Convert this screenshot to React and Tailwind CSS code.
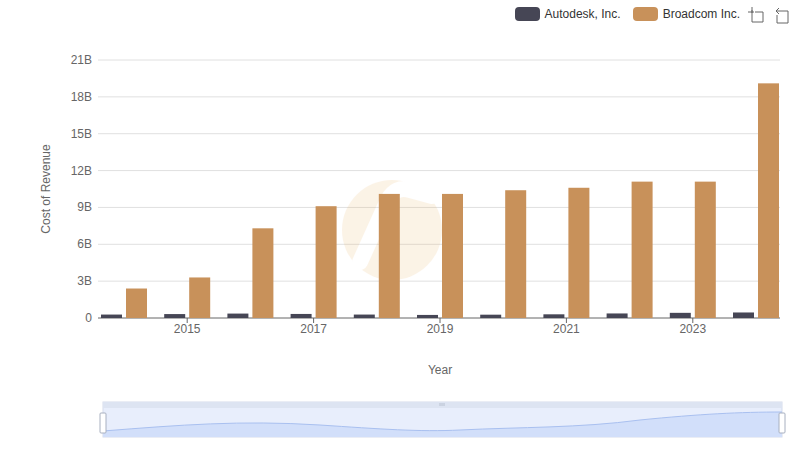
const years = [2014,2015,2016,2017,2018,2019,2020,2021,2022,2023,2024];
const broadcom = [2.4,3.3,7.3,9.1,10.1,10.1,10.4,10.6,11.1,11.1,19.1];
const autodesk = [0.28,0.32,0.36,0.33,0.28,0.25,0.27,0.3,0.37,0.42,0.45];

const X0 = 98, X1 = 780, Y0 = 318, PER = 258 / 21;

export default function App() {
  return (
    <div className="w-[800px] h-[461px] bg-white relative" style={{ fontFamily: '"Liberation Sans", Arial, sans-serif' }}>
      <div className="flex justify-end items-center gap-[12px] pt-[5px] pr-[60px] text-[12px] text-[#333]">
        <div className="flex items-center gap-[5px]">
          <span className="w-[25px] h-[14px] rounded-[4px] bg-[#464655]" />
          <span>Autodesk, Inc.</span>
        </div>
        <div className="flex items-center gap-[5px]">
          <span className="w-[25px] h-[14px] rounded-[4px] bg-[#c8915a]" />
          <span>Broadcom Inc.</span>
        </div>
      </div>
      <svg className="absolute left-0 top-0" width="800" height="461" style={{ pointerEvents: 'none' }}>
        <g stroke="#666" fill="none" strokeWidth="1">
          <path d="M752 10v12h11v-10h-8M748 12h6M752 7v6" />
          <path d="M776 11h12v12h-11v-8M776 11l3-3M776 11l3 3" />
        </g>
        {[0,3,6,9,12,15,18,21].map(v => {
          const y = Y0 - v * PER;
          return (
            <g key={v}>
              {v > 0 && <line x1={X0} x2={X1} y1={y} y2={y} stroke="#e0e0e0" />}
              <text x={92} y={y + 4} fontSize="12" fill="#666" textAnchor="end">{v === 0 ? '0' : v + 'B'}</text>
            </g>
          );
        })}
        <line x1={X0} x2={X1} y1={Y0} y2={Y0} stroke="#666" />
        <g opacity="0.13">
          <circle cx="392" cy="230" r="50" fill="#e8a74a" />
          <path d="M360 262 L388 200 Q395 186 410 190 L432 196" stroke="white" strokeWidth="16" fill="none" strokeLinecap="round" />
        </g>
        {years.map((yr, i) => {
          const c = 124 + 63.2 * i;
          const ha = autodesk[i] * PER, hb = broadcom[i] * PER;
          return (
            <g key={yr}>
              <rect x={c - 23} y={Y0 - ha} width="21" height={ha} fill="#464655" />
              <rect x={c + 2} y={Y0 - hb} width="21" height={hb} fill="#c8915a" />
              {i % 2 === 1 && (
                <>
                  <line x1={c} x2={c} y1={Y0} y2={Y0 + 5} stroke="#666" />
                  <text x={c} y={Y0 + 15} fontSize="12" fill="#666" textAnchor="middle">{yr}</text>
                </>
              )}
            </g>
          );
        })}
        <text x="440" y="374" fontSize="12" fill="#666" textAnchor="middle">Year</text>
        <text transform="translate(50 189) rotate(-90)" fontSize="12" fill="#666" textAnchor="middle">Cost of Revenue</text>
        <rect x="103" y="402" width="679" height="35" fill="#e8eefc" stroke="#d5dcec" />
        <rect x="103" y="402" width="679" height="6" fill="#dde4f2" />
        <path d="M103 431 C180 425 240 420 320 425 C380 429 420 432 460 430 C520 427 580 428 640 420 C700 414 740 412 782 412 V437 H103 Z" fill="#d2dffa" />
        <path d="M103 431 C180 425 240 420 320 425 C380 429 420 432 460 430 C520 427 580 428 640 420 C700 414 740 412 782 412" stroke="#a9c0f0" fill="none" />
        <g stroke="#b0b8c8" strokeWidth="0.8">
          <line x1="440" x2="440" y1="403" y2="406" /><line x1="442" x2="442" y1="403" y2="406" /><line x1="444" x2="444" y1="403" y2="406" />
        </g>
        <rect x="100" y="413" width="6" height="20" rx="1" fill="white" stroke="#a8b0c0" />
        <rect x="779" y="413" width="6" height="20" rx="1" fill="white" stroke="#a8b0c0" />
      </svg>
    </div>
  );
}
